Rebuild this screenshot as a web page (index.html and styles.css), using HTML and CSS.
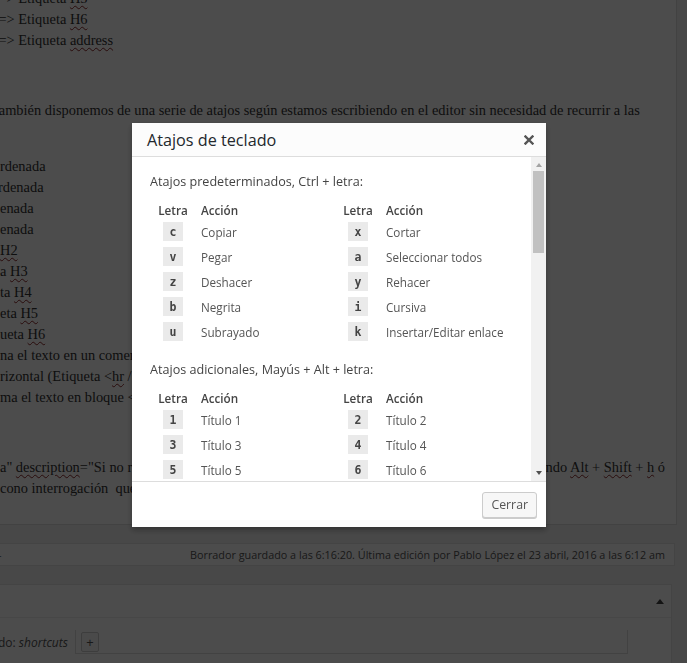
FILE: index.html
```html
<!DOCTYPE html>
<html lang="es">
<head>
<meta charset="utf-8">
<title>Atajos de teclado</title>
<link rel="stylesheet" href="styles.css">
</head>
<body>
<div class="page">
  <div class="editor">
    <div class="content">
      <div class="line first shift-a">=&gt; Etiqueta <span class="sp">H5</span></div>
      <div class="line shift-a">=&gt; Etiqueta <span class="sp">H6</span></div>
      <div class="line shift-a">=&gt; Etiqueta <span class="sp">address</span></div>
      <div class="line gap-a shift-t">También disponemos de una serie de atajos según estamos escribiendo en el editor sin necesidad de recurrir a las</div>
      <div class="line gap-b">rdenada</div>
      <div class="line shift-r">rdenada</div>
      <div class="line">enada</div>
      <div class="line">enada</div>
      <div class="line"><span class="sp">H2</span></div>
      <div class="line">a <span class="sp">H3</span></div>
      <div class="line">ta <span class="sp">H4</span></div>
      <div class="line">eta <span class="sp">H5</span></div>
      <div class="line">ueta <span class="sp">H6</span></div>
      <div class="line">na el texto en un comentario</div>
      <div class="line">rizontal (Etiqueta &lt;<span class="sp">hr</span> /&gt;)</div>
      <div class="line">ma el texto en bloque &lt;blockquote&gt;</div>
      <div class="line split gap-a">
        <span>a" <span class="sp">description</span>="Si no recuerdas</span>
        <span>ndo <span class="sp">Alt</span> + <span class="sp">Shift</span> + <span class="sp">h</span> ó</span>
      </div>
      <div class="line">cono interrogación &nbsp;que aparece</div>
    </div>
  </div>
  <div class="status">
    <span class="status-left">-</span>
    <span>Borrador guardado a las 6:16:20. Última edición por Pablo López el 23 abril, 2016 a las 6:12 am</span>
  </div>
  <div class="postbox">
    <div class="postbox-head"><span class="toggle"></span></div>
    <div class="postbox-body">
      <span class="filter">do: <em>shortcuts</em></span>
      <div class="field"><span class="add-btn">+</span></div>
    </div>
  </div>
</div>

<div class="overlay"></div>

<div class="modal">
  <div class="modal-head">
    <span class="modal-title">Atajos de teclado</span>
    <svg class="close" width="10" height="10" viewBox="0 0 10 10"><path d="M1.5 1.5 L8.5 8.5 M8.5 1.5 L1.5 8.5" stroke="#555" stroke-width="2.4" stroke-linecap="square"/></svg>
  </div>
  <div class="modal-body">
    <div class="scroll-content">
      <p class="sc-heading">Atajos predeterminados, Ctrl + letra:</p>
      <div class="keys">
        <span class="th">Letra</span><span class="th act">Acción</span><span class="th">Letra</span><span class="th act">Acción</span>
        <span class="k"><kbd>c</kbd></span><span class="act">Copiar</span><span class="k"><kbd>x</kbd></span><span class="act">Cortar</span>
        <span class="k"><kbd>v</kbd></span><span class="act">Pegar</span><span class="k"><kbd>a</kbd></span><span class="act">Seleccionar todos</span>
        <span class="k"><kbd>z</kbd></span><span class="act">Deshacer</span><span class="k"><kbd>y</kbd></span><span class="act">Rehacer</span>
        <span class="k"><kbd>b</kbd></span><span class="act">Negrita</span><span class="k"><kbd>i</kbd></span><span class="act">Cursiva</span>
        <span class="k"><kbd>u</kbd></span><span class="act">Subrayado</span><span class="k"><kbd>k</kbd></span><span class="act">Insertar/Editar enlace</span>
      </div>
      <p class="sc-heading second">Atajos adicionales, Mayús + Alt + letra:</p>
      <div class="keys">
        <span class="th">Letra</span><span class="th act">Acción</span><span class="th">Letra</span><span class="th act">Acción</span>
        <span class="k"><kbd>1</kbd></span><span class="act">Título 1</span><span class="k"><kbd>2</kbd></span><span class="act">Título 2</span>
        <span class="k"><kbd>3</kbd></span><span class="act">Título 3</span><span class="k"><kbd>4</kbd></span><span class="act">Título 4</span>
        <span class="k"><kbd>5</kbd></span><span class="act">Título 5</span><span class="k"><kbd>6</kbd></span><span class="act">Título 6</span>
        <span class="k"><kbd>l</kbd></span><span class="act">Alinear a la izquierda</span><span class="k"><kbd>c</kbd></span><span class="act">Centrar</span>
        <span class="k"><kbd>r</kbd></span><span class="act">Alinear a la derecha</span><span class="k"><kbd>j</kbd></span><span class="act">Justificar</span>
      </div>
    </div>
    <div class="scrollbar">
      <span class="arrow up"></span>
      <span class="thumb"></span>
      <span class="track-fill"></span>
      <span class="arrow down"></span>
    </div>
  </div>
  <div class="modal-foot">
    <button class="btn" type="button">Cerrar</button>
  </div>
</div>
</body>
</html>
```
FILE: styles.css
```css
* { box-sizing: border-box; }

html, body {
  margin: 0;
  height: 100%;
}

body {
  background: #f1f1f1;
  overflow: hidden;
  font-family: "Open Sans", "Liberation Sans", sans-serif;
}

.page {
  width: 677px;
}

/* ---------- editor behind the dialog ---------- */
.editor {
  height: 525px;
  background: #fff;
  border-right: 1px solid #ddd;
  border-bottom: 1px solid #ddd;
  overflow: hidden;
  font-family: "Liberation Serif", "Times New Roman", serif;
  font-size: 14.4px;
  line-height: 21px;
  color: #333;
}

.content {
  padding-right: 11px;
}

.line {
  height: 21px;
  white-space: nowrap;
}

.first { margin-top: -12px; }
.gap-a { margin-top: 49px; }
.gap-b { margin-top: 35px; }
.shift-a { margin-left: -1.5px; }
.shift-t { margin-left: -9px; }
.shift-r { margin-left: -2px; }

.split {
  display: flex;
  justify-content: space-between;
}

.sp {
  text-decoration: underline wavy #8a2a2a;
  text-decoration-thickness: 1px;
  text-underline-offset: 2px;
}

/* ---------- status bar ---------- */
.status {
  margin-top: 18px;
  width: 675px;
  height: 23px;
  background: #fff;
  border-top: 1px solid #e5e5e5;
  border-bottom: 1px solid #e5e5e5;
  border-right: 1px solid #e5e5e5;
  display: flex;
  align-items: center;
  justify-content: space-between;
  padding-right: 9px;
  font-size: 10.8px;
  color: #555;
}

.status-left {
  margin-left: -2px;
}

/* ---------- postbox ---------- */
.postbox {
  margin-top: 18px;
  width: 672px;
  height: 100px;
  background: #fff;
  border: 1px solid #e5e5e5;
  border-left: 0;
}

.postbox-head {
  height: 33px;
  border-bottom: 1px solid #eee;
  display: flex;
  align-items: center;
  justify-content: flex-end;
  padding-right: 7px;
}

.toggle {
  width: 0;
  height: 0;
  border-left: 4px solid transparent;
  border-right: 4px solid transparent;
  border-bottom: 5px solid #444;
}

.postbox-body {
  display: flex;
  align-items: flex-start;
  padding-top: 12px;
  font-size: 11.7px;
  color: #555;
}

.filter {
  width: 77px;
  padding-top: 4px;
  margin-left: -2px;
  font-size: 12px;
}

.field {
  width: 553px;
  height: 24px;
  border: 1px solid #ddd;
  border-top: 0;
  padding: 2px 0 0 5px;
}

.add-btn {
  display: flex;
  align-items: center;
  justify-content: center;
  width: 18px;
  height: 20px;
  border: 1px solid #ccc;
  border-radius: 2px;
  background: #f7f7f7;
  font-size: 13px;
  color: #555;
}

/* ---------- overlay & dialog ---------- */
.overlay {
  position: fixed;
  inset: 0;
  background: rgba(0, 0, 0, 0.7);
}

.modal {
  position: fixed;
  left: 132px;
  top: 123px;
  width: 414px;
  height: 404px;
  background: #fff;
  box-shadow: 0 3px 6px rgba(0, 0, 0, 0.3);
  display: flex;
  flex-direction: column;
}

.modal-head {
  flex: none;
  height: 34px;
  background: #fcfcfc;
  border-bottom: 1px solid #ddd;
  display: flex;
  align-items: center;
  justify-content: space-between;
  padding: 0 12px 0 15px;
}

.modal-title {
  font-size: 16.2px;
  color: #23282d;
}

.close {
  display: block;
}

.modal-body {
  flex: 1;
  min-height: 0;
  display: flex;
}

.scroll-content {
  flex: 1;
  overflow: hidden;
  padding: 15px 0 0 18px;
  color: #555;
}

.sc-heading {
  margin: 0 0 10px;
  font-size: 12.6px;
  line-height: 20px;
  color: #444;
}

.sc-heading.second {
  margin-top: 16px;
}

.keys {
  display: grid;
  grid-template-columns: 46px 139px 46px 1fr;
  grid-template-rows: 17px;
  grid-auto-rows: 25px;
  align-items: center;
  font-size: 11.7px;
}

.th {
  text-align: center;
  font-weight: 600;
  color: #444;
  line-height: 17px;
}

.th.act {
  text-align: left;
}

.act {
  padding-left: 5px;
}

.k {
  display: flex;
  justify-content: center;
}

kbd {
  display: flex;
  align-items: center;
  justify-content: center;
  width: 19.5px;
  height: 18.5px;
  background: #eaeaea;
  font-family: "DejaVu Sans Mono", "Liberation Mono", monospace;
  font-size: 11.5px;
  font-weight: bold;
  color: #444;
}

.scrollbar {
  flex: none;
  width: 15px;
  background: #f1f1f1;
  display: flex;
  flex-direction: column;
  align-items: center;
}

.arrow {
  flex: none;
  width: 0;
  height: 0;
  border-left: 3.5px solid transparent;
  border-right: 3.5px solid transparent;
}

.arrow.up {
  margin-top: 6px;
  border-bottom: 4px solid #a3a3a3;
}

.arrow.down {
  margin-bottom: 6px;
  border-top: 4px solid #505050;
}

.thumb {
  flex: none;
  width: 11px;
  height: 82px;
  margin-top: 4px;
  background: #c1c1c1;
}

.track-fill {
  flex: 1;
}

.modal-foot {
  flex: none;
  height: 46px;
  border-top: 1px solid #ddd;
  display: flex;
  align-items: center;
  justify-content: flex-end;
  padding-right: 9px;
}

.btn {
  height: 26px;
  padding: 0 8px;
  font-family: "Open Sans", "Liberation Sans", sans-serif;
  font-size: 12.3px;
  color: #555;
  background: #f7f7f7;
  border: 1px solid #ccc;
  border-radius: 3px;
  box-shadow: 0 1px 0 #ccc;
}
```
